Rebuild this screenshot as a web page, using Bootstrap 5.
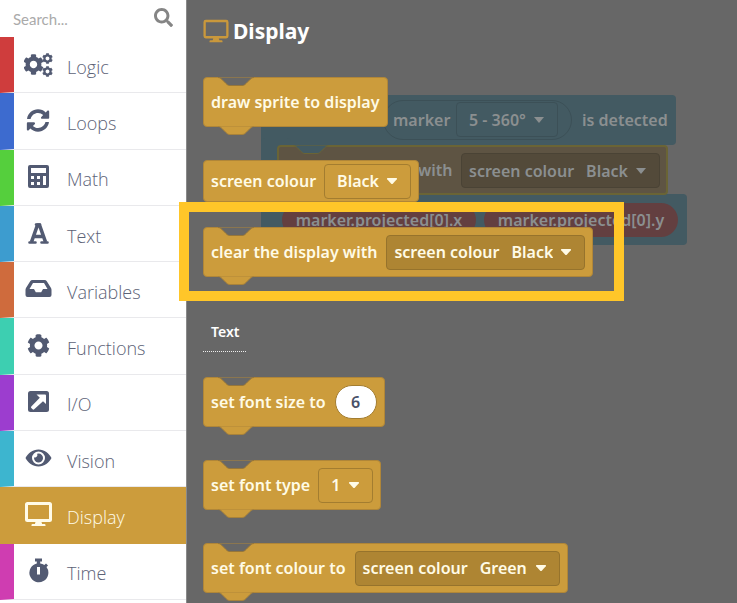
<!DOCTYPE html>
<html lang="en">
<head>
<meta charset="utf-8">
<meta name="viewport" content="width=device-width, initial-scale=1">
<title>Block editor</title>
<link href="https://cdn.jsdelivr.net/npm/bootstrap@5.3.0/dist/css/bootstrap.min.css" rel="stylesheet">
<style>
:root{--tan:#cc9c3c;--tan-line:#a37d30;--ws:#676767;--ink:#525a72}
body{background:var(--ws);font-family:"Noto Sans","Open Sans",sans-serif;font-size:16px;line-height:24px}
.editor{height:100vh;min-height:600px}
.toolbox{width:187px;flex:none;background:#fff;border-right:1px solid #8a8a8a;padding-bottom:3px;font-family:"Open Sans","Noto Sans",sans-serif}
.finder{height:37px;padding:0 13px}
.finder input{font:15px/20px Lato,sans-serif;color:#777;min-width:0}
.finder input::placeholder{color:#aaa;opacity:1}
.finder svg{width:19px;height:19px;flex:none;color:#858585;margin-bottom:2px}
.cat{border-left:14px solid var(--c);border-bottom:1px solid #e9e9ec;color:#5d6377;font-size:18px;font-weight:300;gap:14px;padding-left:10px;flex:1 1 0}
.cat svg{width:29px;height:28px;color:var(--ink);flex:none;margin-bottom:2px}
.cat span{padding-top:4px}
.cat.on{background:var(--c);color:#fffbe8;border-bottom-color:var(--c)}
.cat.on svg{color:#fffbe8}
.flyout{padding:16px 16px 0;z-index:2}
.flyout h1{font-size:21px;line-height:30px;font-weight:700;margin:0 0 31px;color:#fff}
.flyout h1 svg{width:26px;height:26px;color:#c9983c}
.blk{position:relative;width:max-content;height:50px;background:var(--tan);border:1px solid #b08638;border-radius:4px;color:#fffbe6;font-weight:600;padding:0 7px;margin-bottom:33px}
.blk.val{height:42px;margin-bottom:25px}
.notch,.tab{position:absolute;left:12px;width:40px;height:10px}
.notch{top:-1px;fill:var(--n,var(--ws));stroke:#96763a}
.tab{top:48px;fill:var(--tan);stroke:#a8823a}
.slot{height:35px;background:#ae8533;border:1px solid #96732c;border-radius:4px;padding-left:7px;margin-left:9px}
.pick{appearance:none;border:0;color:inherit;font:inherit;height:33px;padding:0 31px 0 12px;background:transparent url("data:image/svg+xml,%3Csvg xmlns='http://www.w3.org/2000/svg' width='12' height='8'%3E%3Cpath d='M1.500 1h9q1 .5.3 1.300L7 6.500q-1 1-2 0L1.200 2.300Q.5 1.500 1.500 1z' fill='%23fffbe6'/%3E%3C/svg%3E") no-repeat right 12px center}
.pick.box{height:35px;border:1px solid var(--tan-line);border-radius:4px;margin-left:8px}
.num{width:42px;height:34px;border:1px solid #a37d30;border-radius:17px;background:#fff;color:#4a5168;font:inherit;margin-left:9px}
.sub{height:42px;width:43px;padding:12px 0 0 8px;margin:0 0 25px;font-size:14px;line-height:20px;font-weight:600;color:#fff;border-bottom:1px dotted #eee}
.canvas{inset:0;font-weight:600;color:#8b8f90}
.piece{position:absolute;display:flex;align-items:center;white-space:nowrap}
.teal{background:#435a62;border-radius:4px}
.ghost{background:#5e5443;border:2px solid #6a6435;border-radius:4px}
.ghost .notch{top:-2px;stroke:#6a6435}
.ring,.pick.ring{border:1px solid #3c5057}
.red{background:#633f40;border-radius:17px;justify-content:center}
.dim{background-image:url("data:image/svg+xml,%3Csvg xmlns='http://www.w3.org/2000/svg' width='12' height='8'%3E%3Cpath d='M1 1h10L6 7z' fill='%238b8f90'/%3E%3C/svg%3E")}
.focus-frame{position:absolute;left:179px;top:202px;width:445px;height:99px;border:10px solid #ffc629;z-index:3;pointer-events:none}
</style>
<script src="https://cdn.jsdelivr.net/npm/bootstrap@5.3.0/dist/js/bootstrap.bundle.min.js"></script>
</head>
<body class="overflow-hidden">
<svg class="d-none">
<symbol id="cog" viewBox="0 0 512 512"><path fill="currentColor" d="M487.400 315.700l-42.600-24.600c4.300-23.200 4.300-47 0-70.200l42.600-24.600c4.900-2.800 7.100-8.600 5.500-14-11.100-35.600-30-67.800-54.700-94.600-3.800-4.100-10-5.100-14.800-2.300L380.800 110c-17.900-15.400-38.500-27.300-60.800-35.100V25.800c0-5.600-3.900-10.500-9.400-11.700-36.700-8.200-74.300-7.800-109.200 0-5.500 1.200-9.400 6.100-9.400 11.700V75c-22.200 7.900-42.800 19.800-60.800 35.100L88.700 85.500c-4.900-2.800-11-1.900-14.800 2.300-24.700 26.700-43.600 58.900-54.700 94.600-1.700 5.400.6 11.200 5.500 14L67.300 221c-4.300 23.200-4.300 47 0 70.200l-42.600 24.600c-4.900 2.800-7.100 8.600-5.500 14 11.100 35.600 30 67.800 54.700 94.600 3.800 4.100 10 5.100 14.800 2.300l42.600-24.600c17.900 15.400 38.500 27.300 60.800 35.100v49.200c0 5.600 3.900 10.500 9.400 11.700 36.700 8.200 74.300 7.800 109.200 0 5.500-1.200 9.400-6.100 9.400-11.700v-49.200c22.200-7.900 42.800-19.800 60.800-35.100l42.600 24.600c4.900 2.800 11 1.900 14.800-2.300 24.700-26.700 43.600-58.900 54.700-94.600 1.500-5.500-.7-11.300-5.600-14.100zM256 346c-49 0-90-41-90-90s41-90 90-90 90 41 90 90-41 90-90 90z"/></symbol>
<symbol id="desk" viewBox="0 0 28 28"><path fill="currentColor" fill-rule="evenodd" d="M3 2h22a2.500 2.500 0 0 1 2.500 2.500v15A2.500 2.500 0 0 1 25 22h-8l.6 2H20a1 1 0 0 1 1 1v1H7v-1a1 1 0 0 1 1-1h2.400l.6-2H3A2.500 2.500 0 0 1 .5 19.500v-15A2.500 2.500 0 0 1 3 2zm.5 3v14h21V5z"/></symbol>
<symbol id="desk-thin" viewBox="0 0 28 28"><path fill="currentColor" fill-rule="evenodd" d="M3 2h22a2.500 2.500 0 0 1 2.500 2.500v15A2.500 2.500 0 0 1 25 22h-8l.6 2H20a1 1 0 0 1 1 1v1H7v-1a1 1 0 0 1 1-1h2.400l.6-2H3A2.500 2.500 0 0 1 .5 19.500v-15A2.500 2.500 0 0 1 3 2zm0 2.500v15h22v-15z"/></symbol>
<symbol id="dent" viewBox="0 0 40 10"><path d="M2 .5c2 0 3 1 4 2l4 4c1 1 2 2 4 2h12c2 0 3-1 4-2l4-4c1-1 2-2 4-2"/><path d="M3 0h34" stroke="none"/></symbol>
</svg>
<div class="editor position-relative d-flex">
<nav class="toolbox d-flex flex-column" aria-label="Block categories">
<div class="finder d-flex align-items-center">
<input class="border-0 p-0 flex-fill bg-transparent" type="search" placeholder="Search..." aria-label="Search blocks">
<svg viewBox="0 0 512 512"><path fill="currentColor" d="M505 442.700L405.300 343c-4.500-4.500-10.600-7-17-7H372c27.600-35.300 44-79.700 44-128C416 93.100 322.900 0 208 0S0 93.100 0 208s93.100 208 208 208c48.300 0 92.700-16.400 128-44v16.300c0 6.400 2.500 12.500 7 17l99.700 99.700c9.400 9.400 24.600 9.400 33.900 0l28.300-28.300c9.400-9.400 9.400-24.600.1-34zM208 336c-70.700 0-128-57.200-128-128 0-70.700 57.200-128 128-128 70.700 0 128 57.200 128 128 0 70.700-57.200 128-128 128z"/></svg>
</div>
<a href="#logic" class="cat d-flex align-items-center text-decoration-none" style="--c:#cf3d3d"><svg viewBox="0 0 29 28"><use href="#cog" x="-1" y="4" width="21" height="21"/><use href="#cog" x="18" y="3" width="11" height="11"/><use href="#cog" x="18" y="16" width="11" height="11"/></svg><span>Logic</span></a>
<a href="#loops" class="cat d-flex align-items-center text-decoration-none" style="--c:#3d6bcf"><svg viewBox="0 0 29 28"><g transform="translate(2.500 3) scale(.045)"><path fill="currentColor" d="M370.720 133.280C339.458 104.008 298.888 87.962 255.848 88c-77.458.068-144.328 53.178-162.791 126.850-1.344 5.363-6.122 9.150-11.651 9.150H24.103c-7.498 0-13.194-6.807-11.807-14.176C33.933 94.924 134.813 8 256 8c66.448 0 126.791 26.136 171.315 68.685L463.030 40.970C478.149 25.851 504 36.559 504 57.941V192c0 13.255-10.745 24-24 24H345.941c-21.382 0-32.090-25.851-16.971-40.971l41.750-41.749zM32 296h134.059c21.382 0 32.090 25.851 16.971 40.971l-41.750 41.750c31.262 29.273 71.835 45.319 114.876 45.280 77.418-.070 144.315-53.144 162.787-126.849 1.344-5.363 6.122-9.150 11.651-9.150h57.304c7.498 0 13.194 6.807 11.807 14.176C478.067 417.076 377.187 504 256 504c-66.448 0-126.791-26.136-171.315-68.685L48.970 471.030C33.851 486.149 8 475.441 8 454.059V320c0-13.255 10.745-24 24-24z"/></g></svg><span>Loops</span></a>
<a href="#math" class="cat d-flex align-items-center text-decoration-none" style="--c:#55cf3d"><svg viewBox="0 0 29 28"><path fill="currentColor" fill-rule="evenodd" d="M6 3h17q2 0 2 2v19q0 2-2 2H6q-2 0-2-2V5q0-2 2-2zm1 3v5h15V6zm0 8v3h3v-3zm6 0v3h3v-3zm-6 6v3h3v-3zm6 0v3h3v-3zm6-6v9h3v-9z"/></svg><span>Math</span></a>
<a href="#text" class="cat d-flex align-items-center text-decoration-none" style="--c:#3d9ccf"><svg viewBox="0 0 29 28"><path fill="none" stroke="currentColor" stroke-linejoin="round" d="M7.500 23L13.500 6h2L21.500 23M9.500 17.500h10" stroke-width="3.600"/><path stroke="currentColor" stroke-width="2.600" stroke-linecap="round" d="M5.500 23.500h6M17.500 23.500h6M12 5.500h4"/></svg><span>Text</span></a>
<a href="#variables" class="cat d-flex align-items-center text-decoration-none" style="--c:#cf6b3d"><svg viewBox="0 0 29 28"><path fill="currentColor" fill-rule="evenodd" d="M8.500 5h12q1.500 0 2.300 1.200L27 13q.5 1 .5 2v5q0 2-2 2h-22q-2 0-2-2v-5q0-1 .5-2l4.200-6.800Q7 5 8.500 5zM9 8l-3.500 6H10l1.800 3.200h5.400L19 14h4.500L20 8z"/></svg><span>Variables</span></a>
<a href="#functions" class="cat d-flex align-items-center text-decoration-none" style="--c:#3dcfb1"><svg viewBox="0 0 29 28"><use href="#cog" x="3" y="3" width="23" height="23"/></svg><span>Functions</span></a>
<a href="#io" class="cat d-flex align-items-center text-decoration-none" style="--c:#9c3dcf"><svg viewBox="0 0 29 28"><rect x="4" y="4" width="21" height="21" rx="2.500" fill="currentColor"/><path fill="#fff" d="M12.500 7.500H21q1 0 1 1V17l-3-2.700-8.800 8q-.9.700-1.600 0l-1.300-1.400q-.7-.8 0-1.500l8.500-8.600z"/></svg><span>I/O</span></a>
<a href="#vision" class="cat d-flex align-items-center text-decoration-none" style="--c:#3db5cf"><svg viewBox="0 0 29 28"><path fill="currentColor" fill-rule="evenodd" d="M14.500 5.500c6 0 10.500 3.700 13 8.500-2.500 4.800-7 8.500-13 8.500s-10.500-3.700-13-8.500c2.500-4.800 7-8.500 13-8.500zm0 2a6.500 6.500 0 1 0 0 13 6.500 6.500 0 0 0 0-13z"/><path fill="currentColor" d="M14.500 9.500a4.500 4.500 0 1 1-4.400 3.700 2.400 2.400 0 0 0 3-3.400z"/></svg><span>Vision</span></a>
<a href="#display" class="cat on d-flex align-items-center text-decoration-none" aria-current="page" style="--c:#cc9c3c"><svg viewBox="0 0 28 28"><use href="#desk"/></svg><span>Display</span></a>
<a href="#time" class="cat d-flex align-items-center text-decoration-none" style="--c:#cf3db1"><svg viewBox="0 0 29 28"><path fill="currentColor" fill-rule="evenodd" d="M11 2.500h7v3h-1.800v2q2.300.4 4.200 1.600l1.600-1.600 2 2-1.500 1.600a9.500 9.500 0 1 1-9.700-3.600v-2H11zM13 11v7.500h3V11z"/></svg><span>Time</span></a>
</nav>

<section class="canvas position-absolute" aria-label="Workspace">
<div class="piece teal" style="left:261px;top:95px;width:415px;height:50px"></div>
<div class="piece teal" style="left:261px;top:138px;width:30px;height:70px"></div>
<div class="piece teal" style="left:261px;top:194px;width:426px;height:51px"></div>
<div class="piece ring" style="left:383px;top:100px;width:189px;height:40px;border-radius:20px"></div>
<label class="piece" for="w1" style="left:393px;top:108px">marker</label>
<div class="piece" style="left:448px;top:102px"><select class="pick box dim ring" id="w1"><option>5 - 360°</option></select></div>
<span class="piece" style="left:582px;top:108px">is detected</span>
<div class="piece ghost" style="left:277px;top:145px;width:391px;height:50px"><svg class="notch" style="--n:#435a62"><use href="#dent"/></svg></div>
<label class="piece" for="w2" style="left:418px;top:158px">with</label>
<div class="piece" style="left:461px;top:153px;width:199px;height:35px;background:#534a3a;border:1px solid #4a4335;border-radius:4px;padding-left:7px">screen colour<select class="pick dim" id="w2"><option>Black</option></select></div>
<span class="piece red" style="left:282px;top:203px;width:194px;height:34px">marker.projected[0].x</span>
<span class="piece red" style="left:484px;top:203px;width:194px;height:34px">marker.projected[0].y</span>
</section>

<main class="flyout position-relative">
<h1 class="d-flex align-items-center gap-1"><svg viewBox="0 0 28 28"><use href="#desk-thin"/></svg>Display</h1>
<div class="blk d-flex align-items-center pe-2"><svg class="notch"><use href="#dent"/></svg><svg class="tab"><use href="#dent"/></svg>draw sprite to display</div>
<div class="blk val d-flex align-items-center"><label for="s1">screen colour</label><select class="pick box" id="s1"><option>Black</option></select></div>
<div class="blk d-flex align-items-center"><svg class="notch"><use href="#dent"/></svg><svg class="tab"><use href="#dent"/></svg>clear the display with<span class="slot d-flex align-items-center"><label for="s2">screen colour</label><select class="pick" id="s2"><option>Black</option></select></span></div>
<h2 class="sub">Text</h2>
<div class="blk d-flex align-items-center"><svg class="notch"><use href="#dent"/></svg><svg class="tab"><use href="#dent"/></svg><label for="s3">set font size to</label><input class="num text-center p-0" id="s3" value="6"></div>
<div class="blk d-flex align-items-center"><svg class="notch"><use href="#dent"/></svg><svg class="tab"><use href="#dent"/></svg><label for="s4">set font type</label><select class="pick box" id="s4"><option>1</option></select></div>
<div class="blk d-flex align-items-center"><svg class="notch"><use href="#dent"/></svg><svg class="tab"><use href="#dent"/></svg>set font colour to<span class="slot d-flex align-items-center"><label for="s5">screen colour</label><select class="pick" id="s5"><option>Green</option></select></span></div>
</main>
<div class="focus-frame"></div>
</div>
</body>
</html>
